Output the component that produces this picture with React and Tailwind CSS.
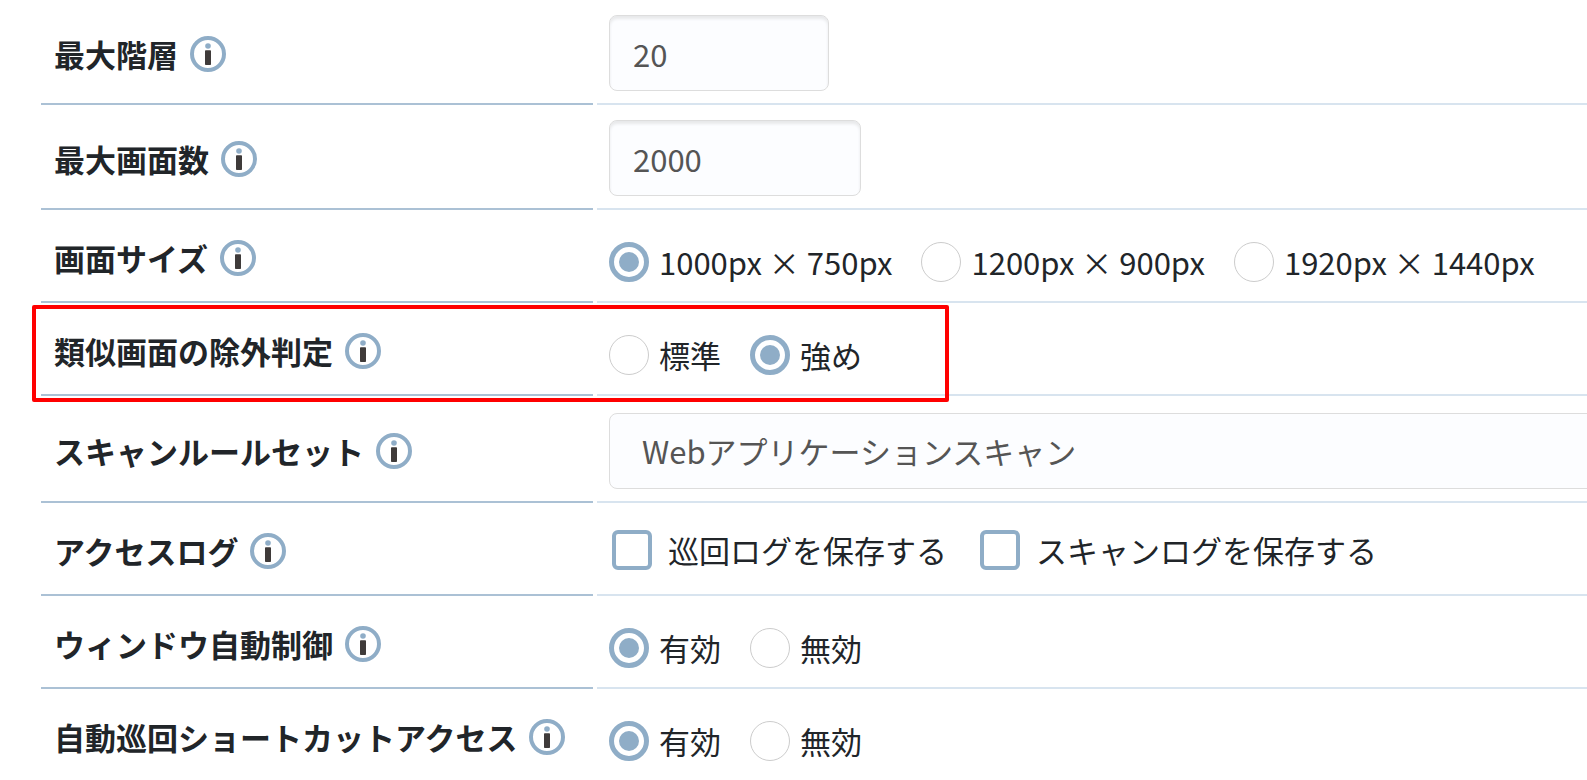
import { useState } from "react";

function InfoIcon() {
    return (
        <svg width="36" height="36" viewBox="0 0 36 36" fill="none" aria-hidden="true">
            <circle cx="18" cy="18" r="16" stroke="#8fadc7" strokeWidth="4" />
            <circle cx="18" cy="10" r="2.8" fill="#8fadc7" />
            <rect x="15" y="14.3" width="6" height="14.7" rx="0.8" fill="#3f3b3a" />
        </svg>
    );
}

function Row({ id, title, htmlFor, highlight, last, children, className }) {
    const Title = htmlFor ? "label" : "span";

    return (
        <div className="relative grid grid-cols-[552px_minmax(0,1fr)] gap-x-1">
            <div className={`flex items-center gap-3 pt-1 pl-[13px] ${last ? "" : "border-b-2 border-[#abc1d5]"}`}>
                <Title id={id} htmlFor={htmlFor} className="font-bold whitespace-nowrap">
                    {title}
                </Title>
                <button type="button" aria-label={`${title}の説明`}>
                    <InfoIcon />
                </button>
            </div>
            <div className={`pl-3 ${last ? "" : "border-b-2 border-[#d8e4ef]"} ${className}`}>
                {children}
            </div>

            {/* Red frame around the row */}
            {highlight && (
                <div className="absolute top-[2px] -bottom-[6px] -left-[9px] w-[917px] border-4 border-[#ff0000] rounded-xs pointer-events-none" />
            )}
        </div>
    );
}

function RadioRow({ name, title, options, initial, highlight, last }) {
    const [value, setValue] = useState(initial);

    return (
        <Row id={name} title={title} highlight={highlight} last={last} className="pt-8 pb-[19px]">
            <div role="radiogroup" aria-labelledby={name} className="flex gap-[29px]">
                {options.map((option) => (
                    <label key={option} className="flex items-center gap-[10px] whitespace-nowrap">
                        <input
                            type="radio"
                            name={name}
                            checked={value === option}
                            onChange={() => setValue(option)}
                            className="appearance-none shrink-0 w-10 h-10 rounded-full border border-[#cccccc] checked:border-5 checked:border-[#8fadc7] checked:p-[5px] checked:bg-[#8fadc7] bg-clip-content"
                        />
                        {option}
                    </label>
                ))}
            </div>
        </Row>
    );
}

function Checkbox({ children }) {
    return (
        <label className="flex items-center gap-4 whitespace-nowrap">
            <input
                type="checkbox"
                className="appearance-none shrink-0 w-10 h-10 rounded-md border-4 border-[#8fadc7] checked:bg-[#8fadc7]"
            />
            {children}
        </label>
    );
}

const fieldClass =
    "block h-[76px] rounded-lg border border-[#dddddd] bg-[#fcfdff] text-[#555555]";

export default function App() {
    return (
        <form className="overflow-hidden bg-white pl-[41px] text-[31px] leading-10 text-[#212529] font-['Noto_Sans_CJK_JP',sans-serif]">
            <Row title="最大階層" htmlFor="max-depth" className="pt-[15px] pb-3">
                <input
                    id="max-depth"
                    type="text"
                    defaultValue="20"
                    className={`${fieldClass} w-[220px] px-[23px] shadow-[inset_0_3px_3px_#e8e9eb]`}
                />
            </Row>

            <Row title="最大画面数" htmlFor="max-pages" className="pt-[15px] pb-3">
                <input
                    id="max-pages"
                    type="text"
                    defaultValue="2000"
                    className={`${fieldClass} w-[252px] px-[23px] shadow-[inset_0_3px_3px_#e8e9eb]`}
                />
            </Row>

            <RadioRow
                name="screen-size"
                title="画面サイズ"
                options={["1000px × 750px", "1200px × 900px", "1920px × 1440px"]}
                initial="1000px × 750px"
            />

            <RadioRow
                name="similar-pages"
                title="類似画面の除外判定"
                options={["標準", "強め"]}
                initial="強め"
                highlight
            />

            <Row title="スキャンルールセット" htmlFor="rule-set" className="pt-[17px] pb-3">
                {/* The field runs past the right edge of the panel */}
                <div className="-mr-12">
                    <select id="rule-set" className={`${fieldClass} w-full appearance-none px-8`}>
                        <option>Webアプリケーションスキャン</option>
                    </select>
                </div>
            </Row>

            <Row id="access-log" title="アクセスログ" className="pt-[27px] pb-6">
                <div role="group" aria-labelledby="access-log" className="flex gap-[33px] pl-[3px]">
                    <Checkbox>巡回ログを保存する</Checkbox>
                    <Checkbox>スキャンログを保存する</Checkbox>
                </div>
            </Row>

            <RadioRow
                name="window-control"
                title="ウィンドウ自動制御"
                options={["有効", "無効"]}
                initial="有効"
            />

            <RadioRow
                name="shortcut-access"
                title="自動巡回ショートカットアクセス"
                options={["有効", "無効"]}
                initial="有効"
                last
            />
        </form>
    );
}
